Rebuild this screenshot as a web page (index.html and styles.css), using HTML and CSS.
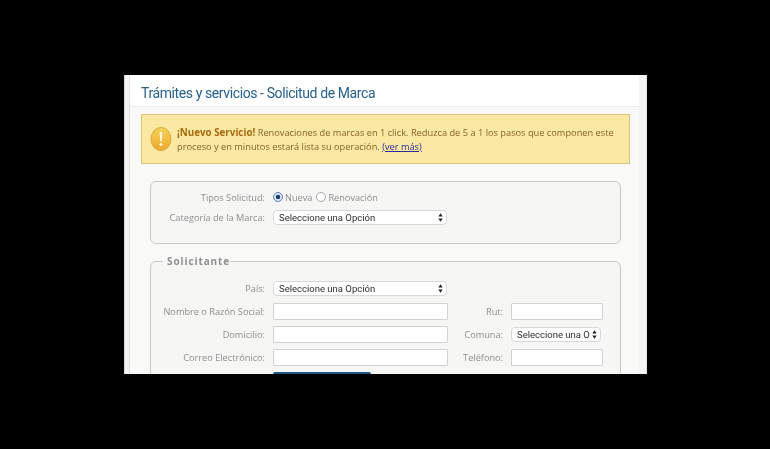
FILE: index.html
```html
<!DOCTYPE html>
<html lang="es">
<head>
<meta charset="utf-8">
<title>Solicitud de Marca</title>
<link rel="stylesheet" href="styles.css">
</head>
<body>
<main class="sheet">
  <div class="content">
    <h1 class="title">Trámites y servicios - Solicitud de Marca</h1>
    <div class="notice">
      <svg class="notice-icon" viewBox="0 0 22 24" width="22" height="24" aria-hidden="true">
        <defs>
          <linearGradient id="coin" x1="0" y1="0" x2="0" y2="1">
            <stop offset="0" stop-color="#f6d258"/>
            <stop offset="1" stop-color="#eaa92c"/>
          </linearGradient>
        </defs>
        <ellipse cx="11" cy="12" rx="10" ry="11.5" fill="url(#coin)" stroke="#e0a63a" stroke-width="1"/>
        <path d="M9.6 5h2.8l-.6 9.5h-1.6z" fill="#fdf6d8"/>
        <circle cx="11" cy="17.6" r="1.5" fill="#fdf6d8"/>
      </svg>
      <p class="notice-text"><b class="notice-lead">¡Nuevo Servicio!</b> Renovaciones de marcas en 1 click. Reduzca de 5 a 1 los pasos que componen este proceso y en minutos estará lista su operación. <a class="notice-link" href="#">(ver más)</a></p>
    </div>

    <form class="form">
      <section class="box box-type">
        <div class="row">
          <span class="label">Tipos Solicitud:</span>
          <div class="radios">
            <label class="radio"><span class="dot dot-on"></span>Nueva</label>
            <label class="radio"><span class="dot"></span>Renovación</label>
          </div>
        </div>
        <div class="row">
          <span class="label">Categoría de la Marca:</span>
          <div class="select select-wide">Seleccione una Opción<svg class="updown" viewBox="0 0 6 10" width="5" height="9"><path d="M3 0l2.6 3.8H.4zM3 10L.4 6.2h5.2z" fill="#222"/></svg></div>
        </div>
      </section>

      <fieldset class="box box-applicant">
        <legend class="legend">Solicitante</legend>
        <div class="row">
          <span class="label">País:</span>
          <div class="select select-wide">Seleccione una Opción<svg class="updown" viewBox="0 0 6 10" width="5" height="9"><path d="M3 0l2.6 3.8H.4zM3 10L.4 6.2h5.2z" fill="#222"/></svg></div>
        </div>
        <div class="row">
          <span class="label">Nombre o Razón Social:</span>
          <input class="input input-wide" type="text">
          <span class="label label-side">Rut:</span>
          <input class="input input-side" type="text">
        </div>
        <div class="row">
          <span class="label">Domicilio:</span>
          <input class="input input-wide" type="text">
          <span class="label label-side">Comuna:</span>
          <div class="select select-side">Seleccione una O<svg class="updown" viewBox="0 0 6 10" width="5" height="9"><path d="M3 0l2.6 3.8H.4zM3 10L.4 6.2h5.2z" fill="#222"/></svg></div>
        </div>
        <div class="row">
          <span class="label">Correo Electrónico:</span>
          <input class="input input-wide" type="text">
          <span class="label label-side">Teléfono:</span>
          <input class="input input-side" type="text">
        </div>
        <div class="row row-action">
          <span class="label"></span>
          <div class="action"></div>
        </div>
      </fieldset>
    </form>
  </div>
</main>
</body>
</html>
```
FILE: styles.css
```css
* { box-sizing: border-box; }

html, body {
  height: 100%;
}

body {
  margin: 0;
  background: #000;
  overflow: hidden;
  padding: 75px 123px 75px 124px;
  font-family: "Open Sans", sans-serif;
}

.sheet {
  width: 523px;
  height: 299px;
  overflow: hidden;
  background: #f4f4f4;
  padding: 0 7px 0 4px;
  border-left: 1px solid #d8d8d8;
  border-right: 1px solid #e6e6e6;
  filter: blur(0.45px);
}

.content {
  background: #f9f9f8;
  min-height: 100%;
  padding: 0 5px 0 11px;
  border-left: 1px solid #e2e2e2;
}

.title {
  margin: 0 -5px 0 -11px;
  height: 32px;
  padding: 8px 0 0 11px;
  font: 400 14px/20px "Roboto", sans-serif;
  color: #27608c;
  letter-spacing: -0.4px;
  border-bottom: 1px solid #ececec;
  background: #fff;
}

.notice {
  margin-top: 7px;
  width: 489px;
  height: 50px;
  display: flex;
  align-items: center;
  gap: 5px;
  padding: 0 8px 0 8px;
  background: #fbe9a3;
  border: 1px solid #d9c480;
}

.notice-icon {
  flex: none;
}

.notice-text {
  margin: 0;
  padding-top: 1px;
  font-size: 9.25px;
  line-height: 13.5px;
  color: #86632a;
}

.notice-lead {
  color: #a86a10;
  font-size: 9.8px;
}

.notice-link {
  color: #2a2a9c;
}

.form {
  display: block;
  padding: 0 9px;
}

.box {
  margin: 0;
  width: 471px;
  border: 1px solid #c9c9c6;
  border-radius: 6px;
  background: #f6f6f5;
}

.box-type {
  margin-top: 17px;
  height: 63px;
  padding: 5px 0 0;
}

.box-applicant {
  margin-top: 10px;
  padding: 9px 0 0;
  min-width: 0;
}

.legend {
  margin-left: 12px;
  padding: 0 0 0 4px;
  font-size: 10px;
  font-weight: 700;
  letter-spacing: 0.9px;
  color: #8f8f8f;
}

.row {
  display: flex;
  align-items: center;
  height: 23px;
}

.box-type .row {
  height: 20px;
}

.label {
  flex: none;
  width: 114px;
  margin-right: 8px;
  text-align: right;
  font-size: 9.2px;
  color: #8e8e8e;
  white-space: nowrap;
}

.label-side {
  width: 48px;
  margin-left: 7px;
  margin-right: 8px;
}

.radios {
  display: flex;
  gap: 4px;
}

.radio {
  display: flex;
  align-items: center;
  gap: 2px;
  font-size: 9.2px;
  color: #8e8e8e;
}

.dot {
  width: 10px;
  height: 10px;
  border: 1px solid #a8a8a8;
  border-radius: 50%;
  background: #fff;
}

.dot-on {
  border-color: #5b82b4;
  background: radial-gradient(circle, #24416e 0 2px, #dce8f6 2.6px);
}

.select {
  position: relative;
  flex: none;
  height: 15px;
  padding-left: 5px;
  font-family: "Roboto", sans-serif;
  font-size: 9.5px;
  line-height: 14px;
  color: #2e2e2e;
  background: #fff;
  border: 1px solid #d8d8d8;
  border-radius: 4px;
  white-space: nowrap;
  overflow: hidden;
}

.select-wide {
  width: 174px;
}

.select-side {
  width: 90px;
  padding-right: 13px;
}

.updown {
  position: absolute;
  right: 3px;
  top: 2px;
}

.input {
  flex: none;
  height: 17px;
  padding: 0;
  background: #fff;
  border: 1px solid #d2d2d2;
  border-radius: 1px;
}

.input-wide {
  width: 175px;
}

.input-side {
  width: 92px;
}

.row-action {
  align-items: flex-start;
  height: 20px;
  padding-top: 3px;
}

.action {
  width: 98px;
  height: 20px;
  background: #1d5583;
  border-radius: 2px;
}
```
